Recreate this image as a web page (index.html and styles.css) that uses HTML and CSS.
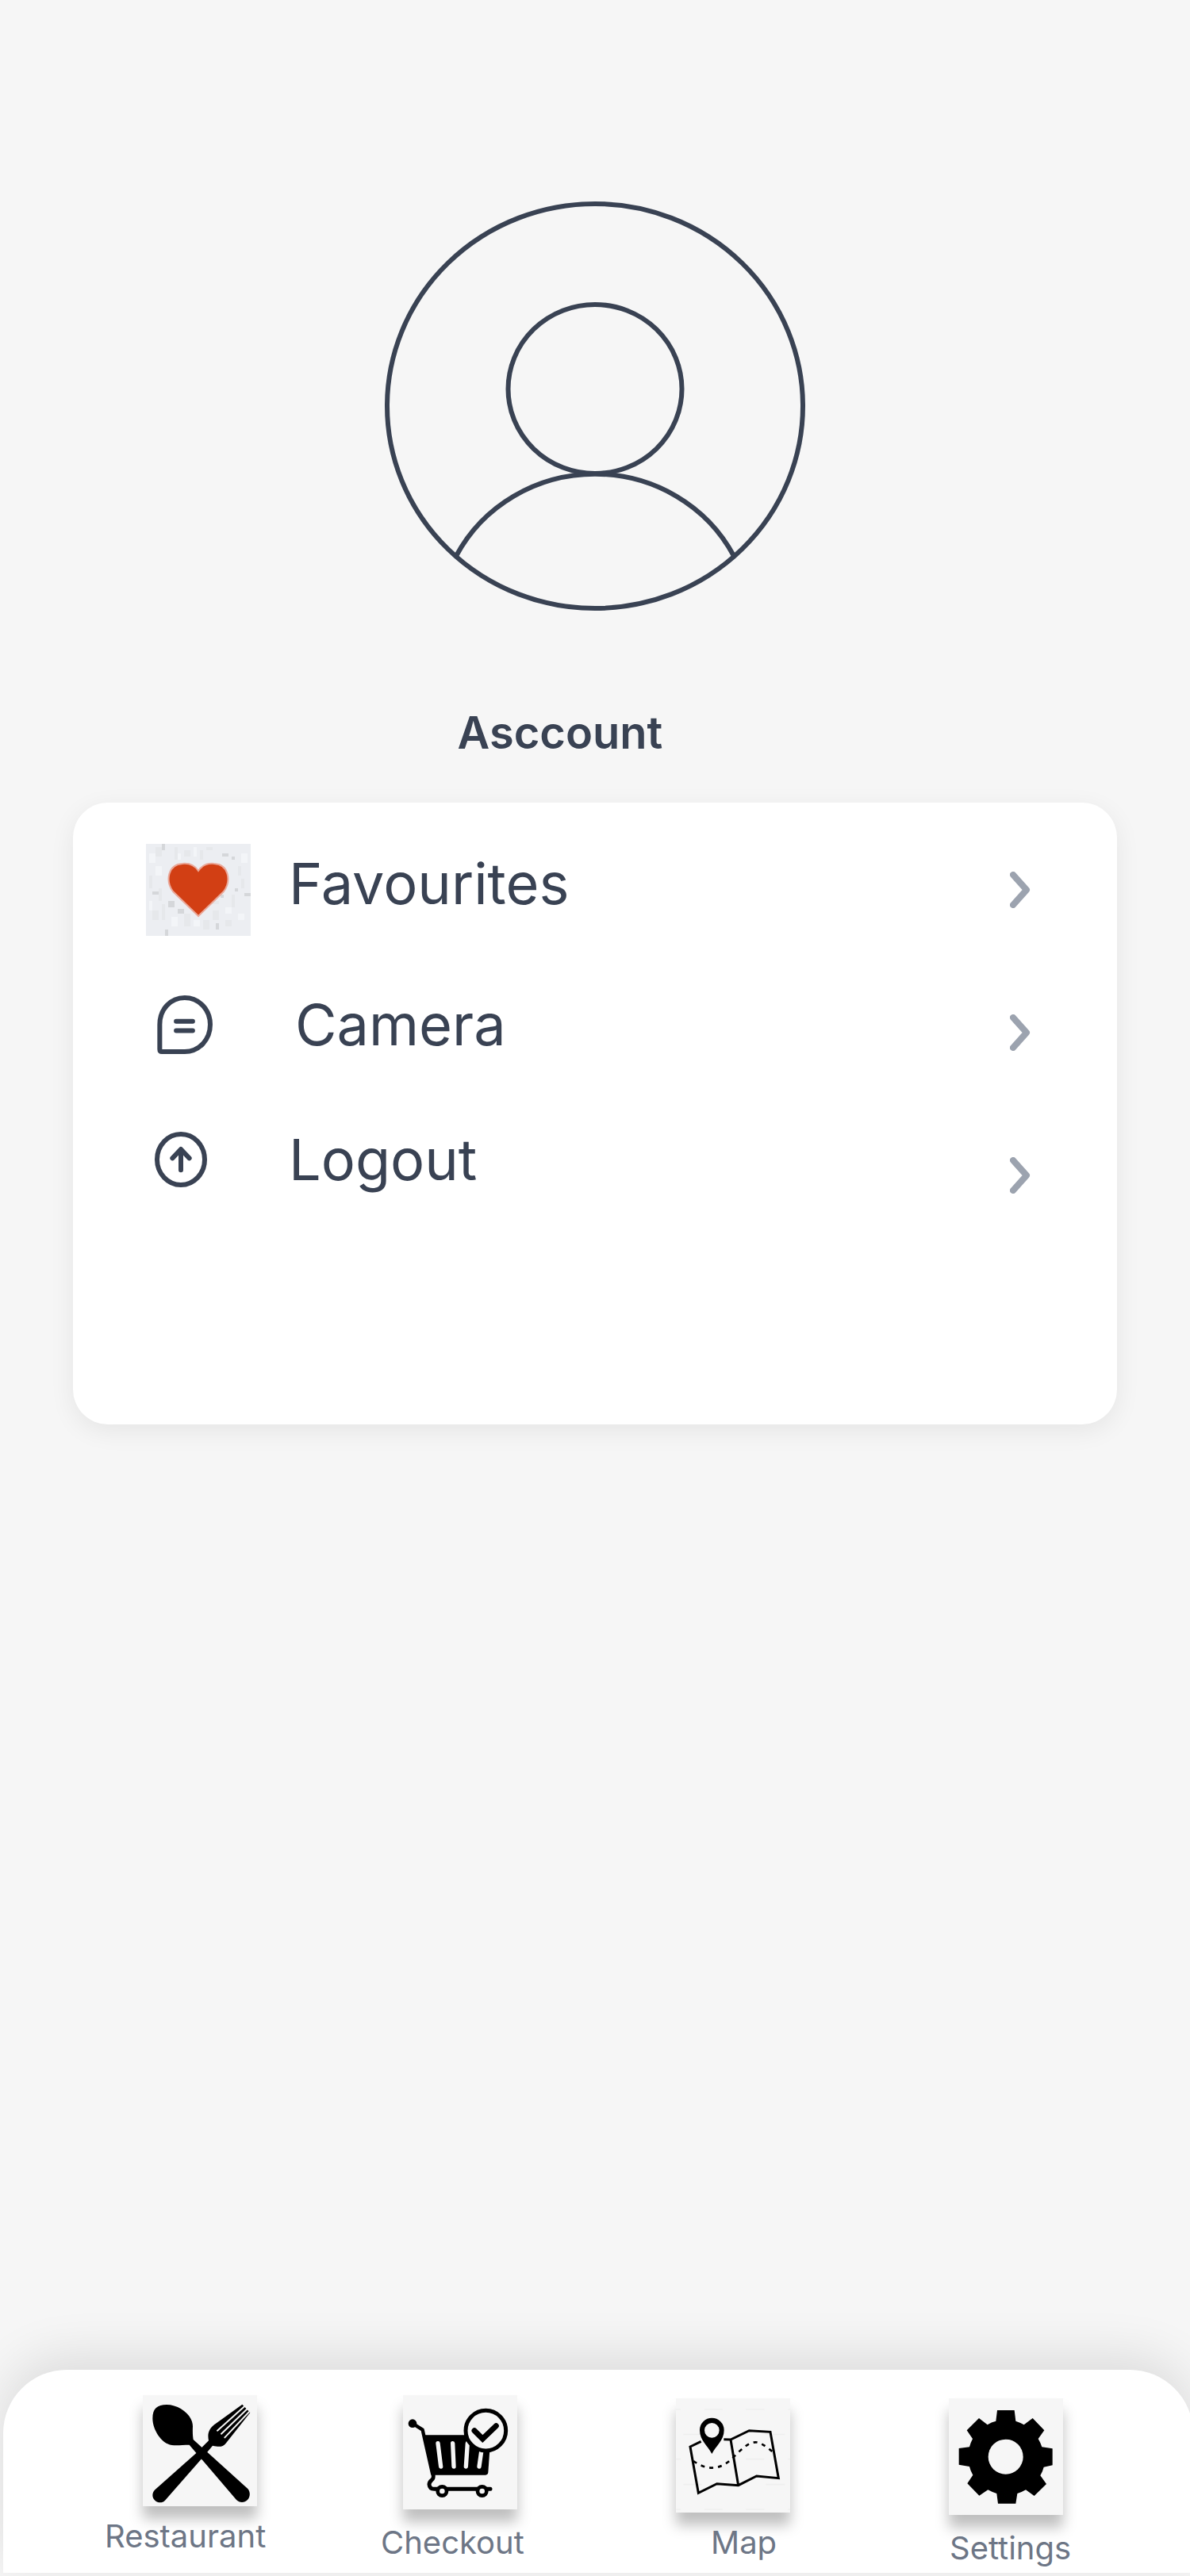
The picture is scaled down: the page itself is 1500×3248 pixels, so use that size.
FILE: index.html
```html
<!DOCTYPE html>
<html lang="en">
<head>
<meta charset="utf-8">
<meta name="viewport" content="width=device-width, initial-scale=1">
<title>Asccount</title>
<link rel="stylesheet" href="styles.css">
</head>
<body>
<div class="screen">
  <main class="account">
    <svg class="avatar" viewBox="485 254 530 516" aria-hidden="true">
      <g fill="none" stroke="currentColor" stroke-width="6">
        <ellipse cx="750" cy="512" rx="262" ry="255"/>
        <ellipse cx="750" cy="490.500" rx="109.500" ry="106.500"/>
        <path d="M575 701A197 191 0 0 1 925 701"/>
      </g>
    </svg>
    <h1 class="account-title">Asccount</h1>

    <ul class="card">
      <li>
        <a class="row row--favourites" href="#favourites">
          <span class="row-icon">
            <svg class="icon-heart" viewBox="0 0 132 116" aria-hidden="true">
              <rect width="132" height="116" fill="#eceef2"/>
              <g fill="#e6e8eb">
                <path d="M12 4h8v12h-8zM36 4h4v16h-4zM48 8h8v8h-8zM68 8h4v12h-4zM76 4h8v4h-8zM116 28h4v12h-4zM4 40h4v16h-4zM16 56h4v16h-4zM8 84h8v12h-8zM20 76h4v20h-4zM48 88h8v16h-8zM72 96h8v12h-8zM84 84h8v12h-8zM108 64h4v16h-4zM120 44h4v12h-4zM100 96h8v8h-8zM80 72h12v4h-12z"/>
              </g>
              <g fill="#d5d7da">
                <path d="M20 0h4v8h-4zM96 12h8v4h-8zM108 16h4v4h-4zM112 56h4v4h-4zM124 62h8v4h-8zM8 60h8v4h-8zM28 72h8v8h-8zM40 82h8v6h-8zM24 108h4v8h-4zM88 100h4v8h-4zM94 64h4v4h-4z"/>
              </g>
              <g fill="#f3f5f8">
                <path d="M4 12h8v12h-8zM40 12h4v8h-4zM60 4h4v12h-4zM88 24h4v8h-4zM120 12h8v12h-8zM12 28h8v12h-8zM4 72h4v12h-4zM32 92h8v12h-8zM60 96h8v8h-8zM100 80h8v8h-8zM116 88h8v8h-8z"/>
              </g>
              <path d="M66 91L34 60C24 46 28 26 46 25C56 24 62 28 66 34C70 28 76 24 86 25C104 26 108 46 98 60Z" fill="#d23f14" stroke="#eaa899" stroke-width="2"/>
            </svg>
          </span>
          <span class="row-label">Favourites</span>
          <svg class="chevron" viewBox="0 0 26 46" aria-hidden="true"><path d="M4 4L21 23L4 42"/></svg>
        </a>
      </li>
      <li>
        <a class="row row--camera" href="#camera">
          <span class="row-icon">
            <svg class="icon-chat" viewBox="115 78 209 221" aria-hidden="true">
              <g fill="none" stroke="currentColor" stroke-width="18" stroke-linecap="round" stroke-linejoin="round">
                <path d="M125 188C125 130 166 87 219 87C273 87 315 132 315 188C315 245 273 290 219 290H133Q125 290 125 281Z"/>
                <path d="M187 176H249M187 211H249"/>
              </g>
            </svg>
          </span>
          <span class="row-label">Camera</span>
          <svg class="chevron" viewBox="0 0 26 46" aria-hidden="true"><path d="M4 4L21 23L4 42"/></svg>
        </a>
      </li>
      <li>
        <a class="row row--logout" href="#logout">
          <span class="row-icon">
            <svg class="icon-up" viewBox="105 593 198 210" aria-hidden="true">
              <g fill="none" stroke="currentColor" stroke-width="18" stroke-linecap="round" stroke-linejoin="round">
                <ellipse cx="204" cy="698" rx="90" ry="96"/>
                <path d="M204 738V660M172 693L204 659L236 693"/>
              </g>
            </svg>
          </span>
          <span class="row-label">Logout</span>
          <svg class="chevron" viewBox="0 0 26 46" aria-hidden="true"><path d="M4 4L21 23L4 42"/></svg>
        </a>
      </li>
    </ul>
  </main>

  <nav class="tabbar" aria-label="Main">
    <a class="tab tab--restaurant" href="#restaurant">
      <svg class="tile" viewBox="0 0 432 420" aria-hidden="true">
        <path d="M37 88C37 50 55 36 90 36C140 36 189 76 189 118C188 140 189 155 191 168L397 354C408 366 406 386 396 396C384 408 366 408 354 396L176 188C150 188 130 192 110 189C70 184 37 130 37 88Z"/>
        <path d="M376 35L270 112C246 132 245 150 249 172L203 218L46 358C34 370 34 388 46 398C58 409 74 408 84 398L240 220L264 191C290 197 302 196 314 182L406 66Z"/>
        <path d="M282 134L384 43M297 146L395 52M310 160L404 61" fill="none" stroke="#f6f6f6" stroke-width="6" stroke-linecap="round"/>
      </svg>
      <span class="tab-label">Restaurant</span>
    </a>
    <a class="tab tab--checkout" href="#checkout">
      <svg class="tile" viewBox="0 0 432 432" aria-hidden="true">
        <circle cx="36" cy="107" r="16"/>
        <path d="M36 107L74 131L80 158L112 300" fill="none" stroke="#000" stroke-width="13" stroke-linejoin="round"/>
        <path d="M78 151H332L322 292Q321 302 312 302H108Z"/>
        <path d="M132 182L143 270M188 182L192 270M244 182L238 270M296 214L288 270" fill="none" stroke="#f6f6f6" stroke-width="16" stroke-linecap="round"/>
        <circle cx="313" cy="134" r="76" fill="#f6f6f6" stroke="#000" stroke-width="15"/>
        <path d="M270 134L301 165L352 116" fill="none" stroke="#000" stroke-width="21" stroke-linecap="round" stroke-linejoin="miter"/>
        <path d="M114 300C120 325 99 318 99 338C100 350 108 355 118 355H330" fill="none" stroke="#000" stroke-width="15" stroke-linecap="round"/>
        <circle cx="148" cy="363" r="17" fill="#f6f6f6" stroke="#000" stroke-width="14"/>
        <circle cx="299" cy="363" r="17" fill="#f6f6f6" stroke="#000" stroke-width="14"/>
      </svg>
      <span class="tab-label">Checkout</span>
    </a>
    <a class="tab tab--map" href="#map">
      <svg class="tile" viewBox="0 0 432 432" aria-hidden="true">
        <path d="M0 42H18M108 42H176M264 42H334M424 42H432M28 136H98M340 136H412M0 230H18M264 230H334M424 230H432M28 326H98M184 326H254M340 326H412M0 420H18M108 420H176M264 420H334M424 420H432" stroke="#efefef" stroke-width="5"/>
        <path d="M95 163L54 183L85 358L155 323L236 329L305 294L388 302L357 127L277 122L207 156L181 155M207 156L236 329" fill="none" stroke="#000" stroke-width="9"/>
        <path d="M66 237C110 268 165 280 220 220C250 190 280 160 310 167C330 172 350 190 368 204" fill="none" stroke="#000" stroke-width="8" stroke-dasharray="15 18"/>
        <path fill-rule="evenodd" d="M136 210C122 180 90 160 90 120A46 46 0 0 1 182 120C182 160 150 180 136 210ZM136 93A28 28 0 1 0 136 149A28 28 0 1 0 136 93Z"/>
      </svg>
      <span class="tab-label">Map</span>
    </a>
    <a class="tab tab--settings" href="#settings">
      <svg class="tile" viewBox="168 252 432 441" aria-hidden="true">
        <path d="M351 297H416L421 338Q437 343 452 352L485 327L529 373L506 405Q515 420 520 436L560 442V505L527 512Q523 528 514 544L537 576L491 621L459 598Q444 607 427 612L421 650H354L349 612Q332 607 316 598L283 620L238 574L259 542Q250 527 246 510L206 503V441L246 436Q250 420 258 405L236 373L282 327L314 352Q329 342 346 338Z"/>
        <circle cx="383" cy="473" r="66" fill="#f6f6f6"/>
      </svg>
      <span class="tab-label">Settings</span>
    </a>
  </nav>
</div>
</body>
</html>
```
FILE: styles.css
```css
:root {
  --page: #f6f6f6;
  --ink: #394253;
  --muted: #6d7686;
  --chevron: #9ca3af;
}

* {
  box-sizing: border-box;
}

body {
  margin: 0;
  background: var(--page);
  color: var(--ink);
  font-family: Inter, "Liberation Sans", sans-serif;
}

a {
  color: inherit;
  text-decoration: none;
}

svg {
  display: block;
  flex: none;
}

.screen {
  display: flex;
  flex-direction: column;
  min-height: 100vh;
  overflow: hidden;
}

.account {
  display: flex;
  flex-direction: column;
  padding: 254px 92px 0;
}

.avatar {
  width: 530px;
  height: 516px;
  align-self: center;
}

.account-title {
  margin: 120px 0 54px;
  padding-right: 88px;
  font-size: 56px;
  font-weight: 600;
  line-height: 68px;
  text-align: center;
}

/* Menu card */
.card {
  margin: 0;
  padding: 20px 109px 224px 92px;
  list-style: none;
  background: #fff;
  border-radius: 44px;
  box-shadow: 0 8px 32px rgba(0, 0, 0, 0.07);
}

.row {
  display: flex;
  align-items: center;
  height: 180px;
}

.row-icon {
  flex: none;
  width: 180px;
}

.row-label {
  flex: 1;
  font-size: 72px;
  line-height: 72px;
}

.row--favourites .row-label {
  padding-bottom: 16px;
}

.row--camera .row-icon,
.row--camera .row-label {
  padding-bottom: 20px;
}

.row--camera .row-icon {
  padding-left: 14px;
}

.row--camera .row-label {
  padding-left: 8px;
}

.row--logout .row-icon,
.row--logout .row-label {
  padding-bottom: 40px;
}

.row--logout .row-icon {
  padding-left: 11px;
}

.icon-heart {
  width: 132px;
  height: 116px;
}

.icon-chat {
  width: 70px;
  height: 74px;
}

.icon-up {
  width: 66px;
  height: 70px;
}

.chevron {
  width: 26px;
  height: 46px;
  fill: none;
  stroke: var(--chevron);
  stroke-width: 8;
  stroke-linecap: round;
  stroke-linejoin: round;
}

/* Bottom tab bar */
.tabbar {
  display: grid;
  grid-template-columns: 348fr 373fr 344fr 308fr;
  align-items: start;
  min-height: 256px;
  margin: auto -4px 4px 4px;
  padding: 32px 0 0 127px;
  background: #fff;
  border-radius: 80px 80px 0 0;
  box-shadow: 0 -16px 64px rgba(0, 0, 0, 0.11);
}

.tab {
  display: flex;
  flex-direction: column;
  align-items: flex-start;
  gap: 14px;
}

.tab-label {
  padding-left: 1px;
  color: var(--muted);
  font-size: 40px;
  line-height: 48px;
}

.tile {
  width: 144px;
  height: 144px;
  background: var(--page);
  box-shadow: 0 16px 16px rgba(0, 0, 0, 0.25);
}

.tab--restaurant .tile {
  height: 140px;
  margin-left: 49px;
}

.tab--checkout {
  gap: 18px;
}

.tab--checkout .tile {
  margin-left: 29px;
}

.tab--map,
.tab--settings {
  padding-top: 4px;
}

.tab--map .tab-label {
  padding-left: 44px;
}

.tab--settings {
  gap: 18px;
}

.tab--settings .tile {
  height: 147px;
}
```
